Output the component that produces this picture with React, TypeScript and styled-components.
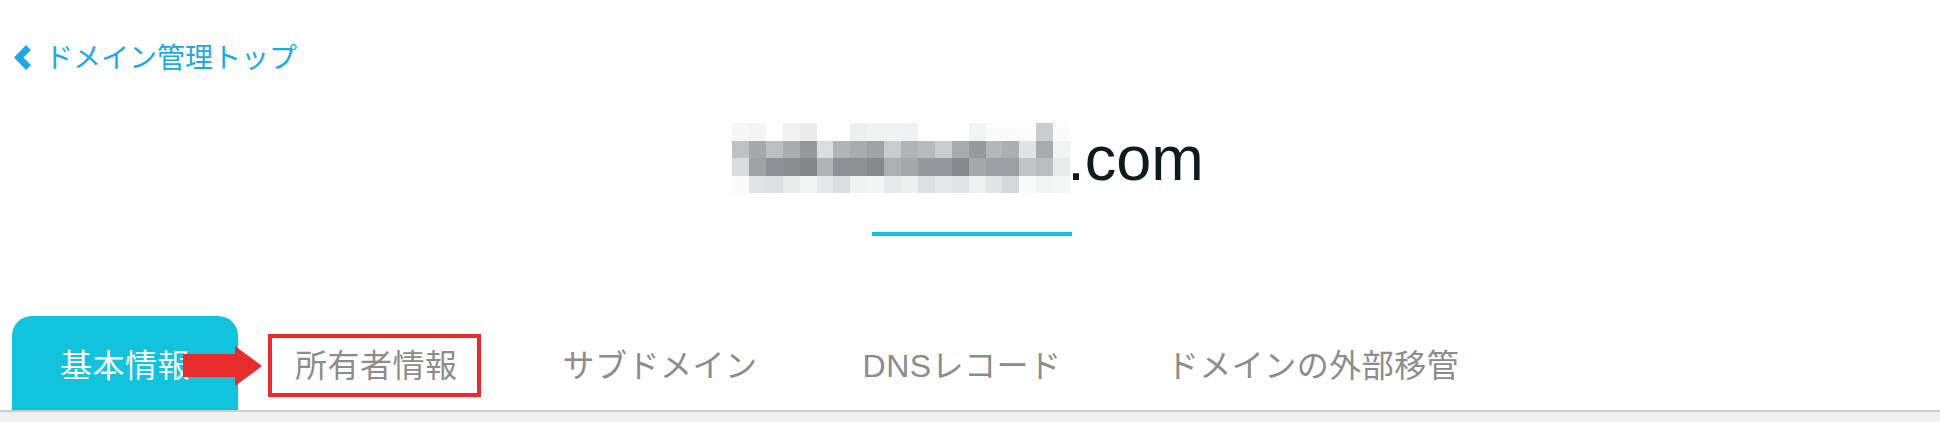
import React from "react";
import styled, { createGlobalStyle } from "styled-components";

const Global = createGlobalStyle`
  html, body { margin: 0; padding: 0; background: #fff; }
  body { font-family: "Liberation Sans", "Noto Sans CJK JP", sans-serif; }
`;

const Page = styled.div`
  width: 1940px;
  height: 422px;
  overflow: hidden;
  display: flex;
  flex-direction: column;
  background: #fff;
`;

const BackLink = styled.a`
  display: flex;
  align-items: center;
  gap: 14px;
  height: 40px;
  margin: 37px 0 0 14px;
  color: #1ba9e6;
  font-size: 28px;
  font-weight: 400;
  line-height: 40px;
  text-decoration: none;
`;

const BackLabel = styled.span`
  padding-top: 4px;
`;

const Chevron = styled.svg`
  width: 17px;
  height: 25px;
  flex: none;
`;

const TitleBlock = styled.div`
  display: flex;
  flex-direction: column;
  align-items: center;
  margin-top: 46px;
`;

const Title = styled.h1`
  display: flex;
  align-items: flex-end;
  height: 70px;
  margin: 0 4px 0 0;
  font-family: "Liberation Sans", Arial, sans-serif;
  font-size: 63px;
  font-weight: 400;
  line-height: 70px;
  color: #0b1b20;
`;

const Mosaic = styled.svg`
  width: 338px;
  height: 70px;
  display: block;
`;

const Domain = styled.span`
  margin-left: -3px;
`;

const Rule = styled.div`
  width: 200px;
  height: 4px;
  margin-top: 39px;
  margin-left: 4px;
  background: #12c3dd;
`;

const Tabs = styled.nav`
  display: flex;
  gap: 9px;
  height: 94px;
  margin-top: 80px;
  padding-left: 12px;
  position: relative;
`;

const Tab = styled.a<{ $active?: boolean }>`
  display: flex;
  align-items: center;
  padding: 5px 48px 0;
  font-size: 32px;
  font-weight: 400;
  letter-spacing: 0.5px;
  line-height: 1;
  white-space: nowrap;
  border-radius: 20px 20px 0 0;
  color: ${(p) => (p.$active ? "#fff" : "#8c8c8c")};
  background: ${(p) => (p.$active ? "#12c3dd" : "transparent")};
`;

const Footer = styled.div`
  flex: 1;
  background: #f1f1f1;
  border-top: 2px solid #cdcdcd;
`;

const Highlight = styled.div`
  position: absolute;
  left: 268px;
  top: 18px;
  width: 213px;
  height: 63px;
  box-sizing: border-box;
  border: 4px solid #e82c2c;
`;

const Arrow = styled.svg`
  position: absolute;
  left: 183px;
  top: 30px;
  width: 79px;
  height: 40px;
`;

const rows = [
  "f7f7f7 f4f4f4 ffffff f2f2f2 ececec ffffff ffffff eeefef f1f2f2 f1f2f2 f0f1f2 ffffff fefefe fefefe f2f3f3 fafbfa fbfbfb fcfcfc c9cdcd fbfbfb",
  "bcc1c1 a4a8aa bcbfbf a8acac 94999b dbdcde afb4b4 a8acac 9fa3a5 c9cccd b0b4b5 b7bbbb c8cccd a9adad 959b9b b3b8b8 abafaf e0e2e3 a7abad f2f3f3",
  "d8dcdc 9ea3a3 8c9293 8a9091 828889 aeb3b3 8c9293 8c9293 858b8c abb0b0 a2a7a7 949a9c 92989a 868c8e a4a9a9 9ca0a2 9ca0a2 c1c5c5 b9bdbd e9ebeb",
  "fafafa e1e4e5 dddfe0 eaecec f3f4f4 e6e7e8 dcdfdf f1f2f2 f3f4f4 e8e9ea eeefef dde0e1 e4e6e7 e2e4e5 f0f1f1 e4e5e6 d5d8d8 f9fafa f3f4f4 f5f6f6",
].map((r) => r.split(" "));

export default function App() {
  return (
    <Page>
      <Global />
      <BackLink href="#">
        <Chevron viewBox="0 0 17 25" aria-hidden="true">
          <path d="M12 0 L17 5 L9.5 12.5 L17 20 L12 25 L0 12.5 Z" fill="#1ba9e6" />
        </Chevron>
        <BackLabel>ドメイン管理トップ</BackLabel>
      </BackLink>
      <TitleBlock>
        <Title>
          <Mosaic viewBox="0 0 338 70" shapeRendering="crispEdges" aria-hidden="true">
            {rows.map((row, y) =>
              row.map((c, x) => (
                <rect key={`${x}-${y}`} x={x * 16.9} y={y * 17.5} width="17" height="17.6" fill={`#${c}`} />
              ))
            )}
          </Mosaic>
          <Domain>.com</Domain>
        </Title>
        <Rule />
      </TitleBlock>
      <Tabs>
        <Tab $active>基本情報</Tab>
        <Tab>所有者情報</Tab>
        <Tab>サブドメイン</Tab>
        <Tab>DNSレコード</Tab>
        <Tab>ドメインの外部移管</Tab>
        <Highlight />
        <Arrow viewBox="0 0 79 40" aria-hidden="true">
          <path d="M0 8 H52 V0 L79 20 L52 40 V31 H0 Z" fill="#e82c2c" />
        </Arrow>
      </Tabs>
      <Footer />
    </Page>
  );
}
